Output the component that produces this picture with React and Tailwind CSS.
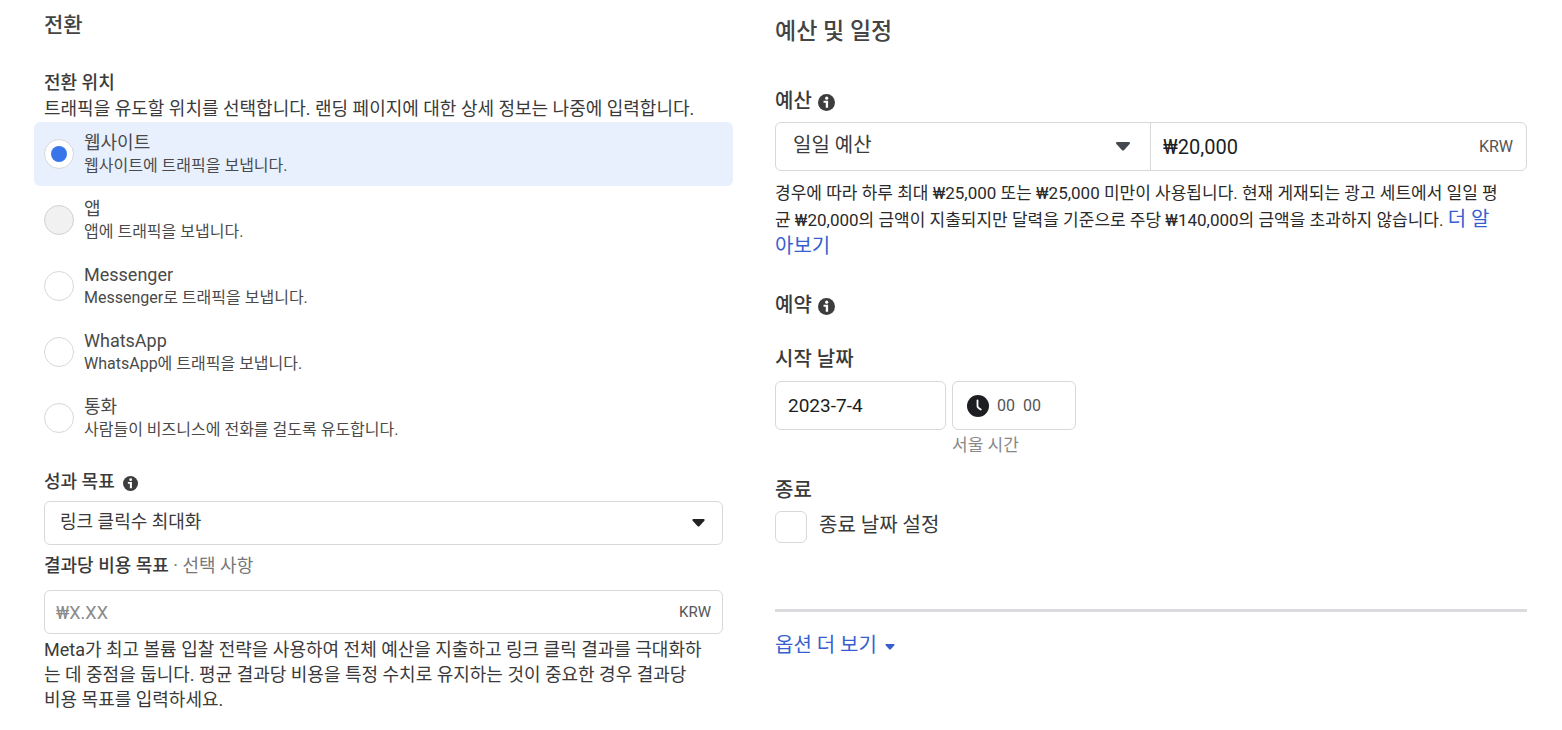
import { useState } from "react";

function InfoIcon({ className }) {
  return (
    <svg viewBox="0 0 16 16" className={className} aria-hidden="true">
      <circle cx="8" cy="8" r="8" fill="#3d3d3d" />
      <circle cx="8.2" cy="3.9" r="1.5" fill="#fff" />
      <path d="M5.2 6.300h4.300v6.700H7.300V8.300H5.200z" fill="#fff" />
    </svg>
  );
}

function Caret({ className }) {
  return (
    <svg viewBox="0 0 14 9" className={className} aria-hidden="true">
      <path
        d="M1.2 0h11.6c1 0 1.5 1.2.8 1.9L8.2 7.9c-.7.8-1.700.8-2.400 0L.4 1.900C-.3 1.200.2 0 1.200 0z"
        fill="currentColor"
      />
    </svg>
  );
}

function ClockIcon({ className }) {
  return (
    <svg viewBox="0 0 22 22" className={className} aria-hidden="true">
      <circle cx="11" cy="11" r="11" fill="#1c1e21" />
      <path
        d="M10.500 5.500v5.800c0 .8 1.200 2 3.300 3.200"
        fill="none"
        stroke="#fff"
        strokeWidth="1.800"
        strokeLinecap="round"
        strokeLinejoin="round"
      />
    </svg>
  );
}

const destinations = [
  { id: "website", name: "웹사이트", hint: "웹사이트에 트래픽을 보냅니다." },
  { id: "app", name: "앱", hint: "앱에 트래픽을 보냅니다.", disabled: true },
  { id: "messenger", name: "Messenger", hint: "Messenger로 트래픽을 보냅니다." },
  { id: "whatsapp", name: "WhatsApp", hint: "WhatsApp에 트래픽을 보냅니다." },
  { id: "calls", name: "통화", hint: "사람들이 비즈니스에 전화를 걸도록 유도합니다." },
];

function Destination({ item, checked, onSelect }) {
  return (
    <label
      className={
        "flex h-16 items-center gap-2.5 rounded-md px-2.5 " + (checked ? "bg-[#e8f0fd]" : "")
      }
    >
      <span className="grid shrink-0 place-items-center">
        <input
          type="radio"
          name="destination"
          value={item.id}
          checked={checked}
          disabled={item.disabled}
          onChange={() => onSelect(item.id)}
          className="peer col-start-1 row-start-1 size-[30px] appearance-none rounded-full border border-[#d8d8d8] bg-white disabled:border-[#d0d0d0] disabled:bg-[#f1f1f1]"
        />
        <span className="col-start-1 row-start-1 hidden size-4 rounded-full bg-[#3975ea] peer-checked:block" />
      </span>
      <span className="flex flex-col text-[#4a4a4a]">
        <span className="text-[18px] leading-6">{item.name}</span>
        <span className="text-[16px] leading-[22px]">{item.hint}</span>
      </span>
    </label>
  );
}

function ConversionSection() {
  const [destination, setDestination] = useState("website");
  return (
    <section className="pt-[9px] text-[18px] text-[#3a3a3a]">
      <h2 className="text-[21px] leading-8 font-medium text-[#444]">전환</h2>

      <fieldset className="mt-[30px]">
        <legend className="leading-6 font-medium">전환 위치</legend>
        <p className="leading-[27px] whitespace-nowrap">
          트래픽을 유도할 위치를 선택합니다. 랜딩 페이지에 대한 상세 정보는 나중에 입력합니다.
        </p>
        <div className="-mx-2.5 flex flex-col gap-0.5">
          {destinations.map((item) => (
            <Destination
              key={item.id}
              item={item}
              checked={destination === item.id}
              onSelect={setDestination}
            />
          ))}
        </div>
      </fieldset>

      <div className="mt-5 flex items-center gap-2">
        <label htmlFor="goal" className="leading-6 font-medium">
          성과 목표
        </label>
        <InfoIcon className="mt-0.5 size-[15px]" />
      </div>
      <div className="mt-[7px] grid items-center">
        <select
          id="goal"
          className="col-start-1 row-start-1 h-11 w-full appearance-none rounded-md border border-[#d8d8d8] bg-white px-[15px] pb-1"
        >
          <option>링크 클릭수 최대화</option>
        </select>
        <Caret className="pointer-events-none col-start-1 row-start-1 mr-[18px] h-2 w-[13px] justify-self-end text-[#222]" />
      </div>

      <label htmlFor="cost" className="mt-[9px] block leading-6 font-medium">
        결과당 비용 목표 <span className="font-normal text-[#777]">· 선택 사항</span>
      </label>
      <div className="mt-3 flex h-11 items-center rounded-md border border-[#d8d8d8] px-[11px]">
        <input
          id="cost"
          placeholder="₩X.XX"
          className="min-w-0 flex-1 outline-none placeholder:text-[#8a8a8a]"
        />
        <span className="text-[15px] text-[#555]">KRW</span>
      </div>
      <p className="mt-[3px] leading-[25px] whitespace-nowrap">
        Meta가 최고 볼륨 입찰 전략을 사용하여 전체 예산을 지출하고 링크 클릭 결과를 극대화하
        <br />는 데 중점을 둡니다. 평균 결과당 비용을 특정 수치로 유지하는 것이 중요한 경우 결과당
        <br />
        비용 목표를 입력하세요.
      </p>
    </section>
  );
}

function BudgetSection() {
  return (
    <section className="pt-4 text-[20px] text-[#3a3a3a]">
      <h2 className="text-[23px] leading-8 font-medium text-[#444]">예산 및 일정</h2>

      <div className="mt-10 flex items-center gap-1.5">
        <label htmlFor="budget-type" className="leading-[26px] font-medium">
          예산
        </label>
        <InfoIcon className="mt-0.5 size-[17px]" />
      </div>
      <div className="mt-2 grid h-[49px] grid-cols-2 rounded-md border border-[#d8d8d8]">
        <div className="grid items-center border-r border-[#d8d8d8]">
          <select
            id="budget-type"
            className="col-start-1 row-start-1 h-full w-full appearance-none bg-transparent px-[17px] pb-1"
          >
            <option>일일 예산</option>
          </select>
          <Caret className="pointer-events-none col-start-1 row-start-1 mr-5 h-[9px] w-3.5 justify-self-end text-[#444950]" />
        </div>
        <div className="flex items-center pr-[13px] pl-3">
          <input
            aria-label="예산"
            defaultValue="₩20,000"
            className="min-w-0 flex-1 text-[#1c1e21] outline-none"
          />
          <span className="text-[16px] text-[#555]">KRW</span>
        </div>
      </div>
      <p className="mt-[9px] text-[17px] leading-[26px] whitespace-nowrap text-[#2a2a2a]">
        경우에 따라 하루 최대 ₩25,000 또는 ₩25,000 미만이 사용됩니다. 현재 게재되는 광고 세트에서
        일일 평
        <br />균 ₩20,000의 금액이 지출되지만 달력을 기준으로 주당 ₩140,000의 금액을 초과하지
        않습니다.{" "}
        <a href="#learn-more" className="text-[20px] text-[#385fd0]">
          더 알<br />
          아보기
        </a>
      </p>

      <div className="mt-8 flex items-center gap-1.5">
        <h3 className="leading-[26px] font-medium">예약</h3>
        <InfoIcon className="mt-0.5 size-[17px]" />
      </div>

      <label htmlFor="start-date" className="mt-7 block leading-[26px] font-medium">
        시작 날짜
      </label>
      <div className="mt-[9px] flex items-start gap-1.5">
        <input
          id="start-date"
          defaultValue="2023-7-4"
          className="h-[49px] w-[171px] rounded-md border border-[#d8d8d8] px-3 text-[19px] text-[#1c1e21]"
        />
        <div>
          <div className="flex h-[49px] w-[124px] items-center gap-2 rounded-md border border-[#d8d8d8] px-3.5 text-[16px] text-[#555]">
            <ClockIcon className="size-[22px] shrink-0" />
            <input aria-label="시" defaultValue="00" className="w-[18px]" />
            <input aria-label="분" defaultValue="00" className="w-[18px]" />
          </div>
          <p className="mt-[3px] text-[17px] leading-6 text-[#888]">서울 시간</p>
        </div>
      </div>

      <h3 className="mt-5 leading-[26px] font-medium">종료</h3>
      <div className="mt-2 flex items-center gap-3">
        <input
          id="end-date"
          type="checkbox"
          className="size-8 appearance-none rounded-md border border-[#d8d8d8] bg-white"
        />
        <label htmlFor="end-date" className="pb-1 leading-7">
          종료 날짜 설정
        </label>
      </div>

      <hr className="mt-[66px] border-t-[3px] border-[#dadbde]" />
      <button type="button" className="mt-5 flex items-center gap-2 leading-[26px] text-[#385fd0]">
        옵션 더 보기
        <Caret className="mt-1 h-1.5 w-2.5" />
      </button>
    </section>
  );
}

export default function App() {
  return (
    <main className="grid grid-cols-[679fr_752fr] gap-[52px] bg-white pr-[35px] pb-4 pl-11 font-['Roboto','Noto_Sans_CJK_KR',sans-serif]">
      <ConversionSection />
      <BudgetSection />
    </main>
  );
}
